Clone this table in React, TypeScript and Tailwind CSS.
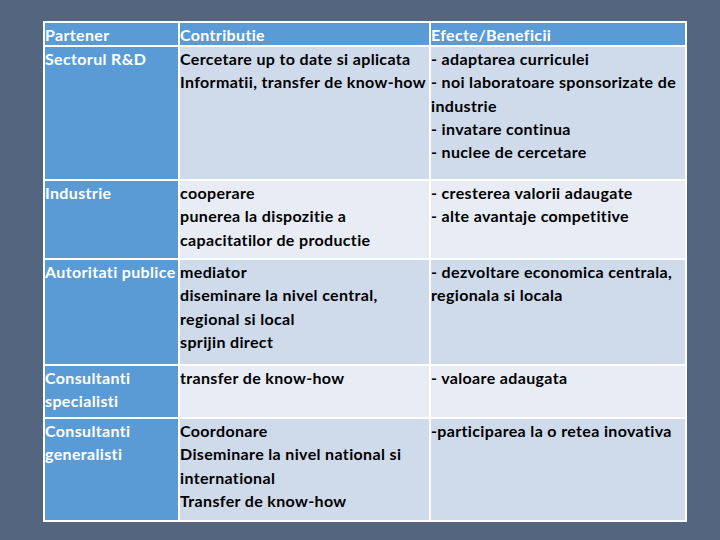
type Row = {
  partner: string[];
  contrib: string[];
  effects: string[];
  height: string;
  tone: string;
};

const rows: Row[] = [
  {
    partner: ["Sectorul R&D"],
    contrib: ["Cercetare up to date si aplicata", "Informatii, transfer de know-how"],
    effects: [
      "- adaptarea curriculei",
      "- noi laboratoare sponsorizate de",
      "industrie",
      "- invatare continua",
      "- nuclee de cercetare",
    ],
    height: "h-[132px]",
    tone: "bg-[#cfdaeb]",
  },
  {
    partner: ["Industrie"],
    contrib: ["cooperare", "punerea la dispozitie a", "capacitatilor de productie"],
    effects: ["- cresterea valorii adaugate", "- alte avantaje competitive"],
    height: "h-[77px]",
    tone: "bg-[#e8ecf5]",
  },
  {
    partner: ["Autoritati publice"],
    contrib: ["mediator", "diseminare la nivel central,", "regional si local", "sprijin direct"],
    effects: ["- dezvoltare economica centrala,", "regionala si locala"],
    height: "h-[104px]",
    tone: "bg-[#cfdaeb]",
  },
  {
    partner: ["Consultanti", "specialisti"],
    contrib: ["transfer de know-how"],
    effects: ["- valoare adaugata"],
    height: "h-[51px]",
    tone: "bg-[#e8ecf5]",
  },
  {
    partner: ["Consultanti", "generalisti"],
    contrib: ["Coordonare", "Diseminare la nivel national si", "international", "Transfer de know-how"],
    effects: ["-participarea la o retea inovativa"],
    height: "h-[101px]",
    tone: "bg-[#cfdaeb]",
  },
];

function Lines({ lines }: { lines: string[] }) {
  return (
    <>
      {lines.map((l) => (
        <div key={l} className="whitespace-nowrap">
          {l}
        </div>
      ))}
    </>
  );
}

export default function App() {
  return (
    <div
      className="h-[540px] w-[720px] bg-[#54657f] pt-[21px] pl-[43px]"
      style={{ fontFamily: "Lato, 'Open Sans', sans-serif" }}
    >
      <div className="grid w-[644px] grid-cols-[133px_249px_254px] gap-[2px] bg-white p-[2px] text-[16px] font-bold leading-[23.3px] tracking-[0.35px] [font-variant-ligatures:none]">
        <div className="h-[22px] bg-[#5b9bd5] text-white">Partener</div>
        <div className="h-[22px] bg-[#5b9bd5] text-white">Contributie</div>
        <div className="h-[22px] bg-[#5b9bd5] text-white">Efecte/Beneficii</div>
        {rows.map((r) => (
          <div key={r.partner.join()} className="contents">
            <div className={`${r.height} bg-[#5b9bd5] text-white`}>
              <Lines lines={r.partner} />
            </div>
            <div className={`${r.height} ${r.tone} text-black`}>
              <Lines lines={r.contrib} />
            </div>
            <div className={`${r.height} ${r.tone} text-black`}>
              <Lines lines={r.effects} />
            </div>
          </div>
        ))}
      </div>
    </div>
  );
}
